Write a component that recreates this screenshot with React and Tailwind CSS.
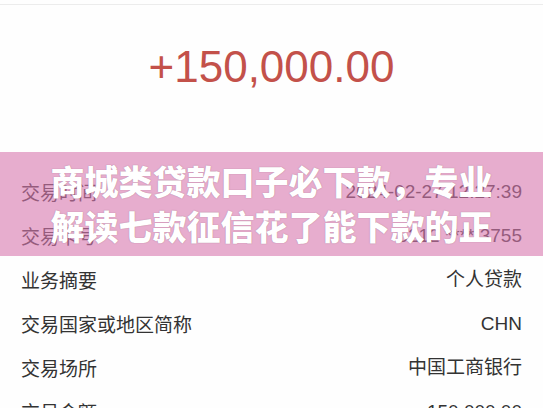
import React from "react";

const rows = [
  ["交易时间", "2024-02-27 12:27:39"],
  ["交易卡号", "6212 **** 3755"],
  ["业务摘要", "个人贷款"],
  ["交易国家或地区简称", "CHN"],
  ["交易场所", "中国工商银行"],
  ["交易金额", "150,000.00"],
];

export default function App() {
  return (
    <div
      className="relative w-[543px] h-[408px] overflow-hidden bg-[#fefefe]"
      style={{ fontFamily: '"Liberation Sans", "Noto Sans CJK SC", sans-serif' }}
    >
      <div className="h-[4px]" />
      <div className="h-px bg-[#ececec]" />
      <div className="h-[165px] pt-[40px] flex justify-center">
        <div className="text-[44px] leading-[44px] text-[#c3514a]">+150,000.00</div>
      </div>
      <div className="flex flex-col">
        {rows.map(([k, v]) => (
          <div key={k} className="h-[44px] flex items-center justify-between px-[21px] text-[19px] text-[#333333]">
            <span style={{ fontFamily: '"Noto Sans CJK SC", sans-serif' }}>{k}</span>
            <span>{v}</span>
          </div>
        ))}
      </div>
      <div className="absolute left-0 right-0 top-[152px] h-[104px] bg-[rgba(215,118,173,0.6)] flex flex-col items-center justify-center">
        <div
          className="text-white text-[34px] leading-[45px] font-black text-center -mt-[2px]"
          style={{ fontFamily: '"Noto Sans CJK SC", sans-serif', textShadow: "0 0 1px rgba(80,40,60,0.5)" }}
        >
          <div>商城类贷款口子必下款，专业</div>
          <div>解读七款征信花了能下款的正</div>
        </div>
      </div>
    </div>
  );
}
